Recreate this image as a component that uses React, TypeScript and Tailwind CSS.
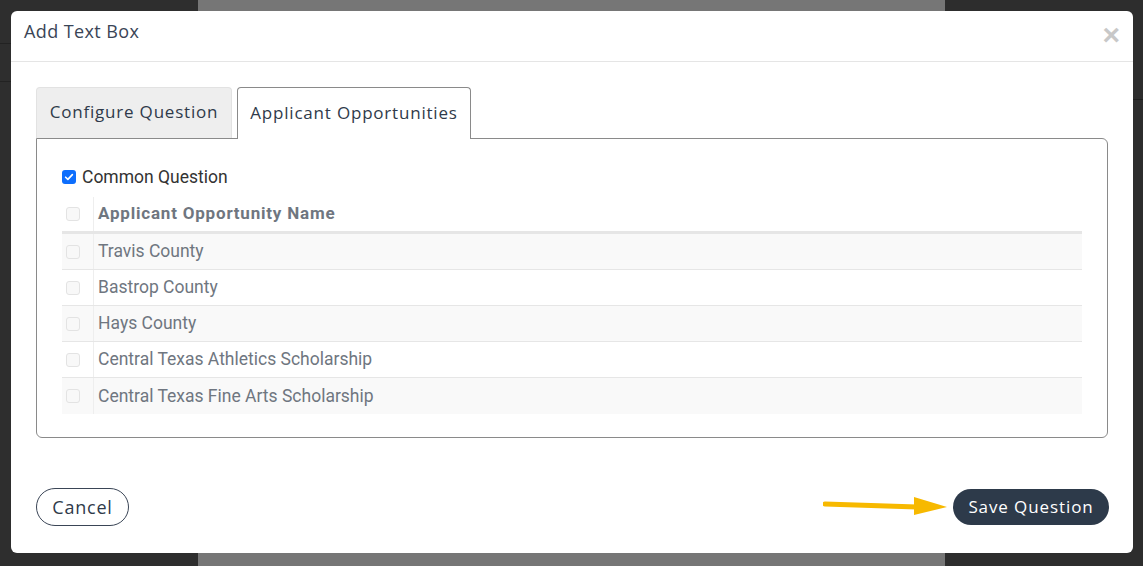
import React from "react";

const rows = [
  "Travis County",
  "Bastrop County",
  "Hays County",
  "Central Texas Athletics Scholarship",
  "Central Texas Fine Arts Scholarship",
];

function Box() {
  return <span className="block w-[14px] h-[14px] rounded-[3px] border border-[#e3e3e3] bg-[#f8f8f8]" />;
}

export default function App() {
  const poppins = { fontFamily: "'Open Sans', 'Noto Sans', sans-serif" };
  return (
    <div className="relative w-[1143px] h-[566px] overflow-hidden flex bg-[#2f2f2f]">
      <div className="w-[198px] h-full bg-[#2e2e2e] flex flex-col">
        <div className="h-[44px] border-b border-[#222]" />
        <div className="h-[38px] border-b border-[#222]" />
      </div>
      <div className="w-[747px] h-full bg-[#767676]" />
      <div className="flex-1 h-full bg-[#2d2d2d] flex flex-col">
        <div className="h-[42px]" />
        <div className="h-[58px] border-b border-[#1f1f1f]" />
      </div>

      <div className="absolute left-[11px] top-[11px] w-[1122px] h-[542px] bg-white rounded-[6px] flex flex-col">
        <div className="h-[51px] border-b border-[#e5e5e5] flex items-center justify-between pl-[13px] pr-[13px] pb-[9px] shrink-0">
          <span className="text-[18px] text-[#3a4556] tracking-[0.4px]" style={poppins}>Add Text Box</span>
          <span className="text-[30px] leading-none text-[#c8c8c8] font-bold mt-[7px]" style={{ fontFamily: "'Liberation Sans', sans-serif" }}>×</span>
        </div>

        <div className="px-[25px] pt-[25px] flex-1 flex flex-col">
          <div className="flex items-end gap-[5px] h-[51px]">
            <div
              className="w-[196px] h-[51px] bg-[#eeeeee] border border-[#e2e2e2] border-b-0 rounded-t-[4px] flex items-center justify-center text-[17px] tracking-[0.8px] text-[#2f3a4a] pb-[2px]"
              style={poppins}
            >
              Configure Question
            </div>
            <div
              className="w-[234px] h-[52px] bg-white border border-[#8a8a8a] border-b-0 rounded-t-[4px] flex items-center justify-center text-[17px] tracking-[0.8px] text-[#2f3a4a] relative top-[1px] z-10 pb-[2px]"
              style={poppins}
            >
              Applicant Opportunities
            </div>
          </div>
          <div className="h-[300px] border border-[#8a8a8a] rounded-b-[6px] rounded-tr-[6px] px-[25px] pt-[28px]" style={{ fontFamily: "Roboto, sans-serif" }}>
            <div className="flex items-center gap-[6px] h-[20px]">
              <span className="w-[14px] h-[14px] rounded-[3px] bg-[#0d6efd] flex items-center justify-center">
                <svg viewBox="0 0 16 16" className="w-[12px] h-[12px]">
                  <path d="M3.5 8.3 L6.5 11.2 L12.5 4.8" fill="none" stroke="white" strokeWidth="2.2" strokeLinecap="round" strokeLinejoin="round" />
                </svg>
              </span>
              <span className="text-[17.5px] text-[#333]">Common Question</span>
            </div>
            <div className="mt-[10px]">
              <div className="flex h-[37px] border-b-[3px] border-[#e6e6e6]">
                <div className="w-[32px] flex items-center pl-[4px] border-r border-[#eeeeee]"><Box /></div>
                <div className="flex items-center pl-[4px] text-[17px] tracking-[0.8px] font-bold text-[#6f7680]">Applicant Opportunity Name</div>
              </div>
              {rows.map((r, i) => (
                <div key={r} className={`flex h-[36px] ${i < rows.length - 1 ? "border-b border-[#e6e6e6]" : ""} ${i % 2 === 0 ? "bg-[#f9f9f9]" : "bg-white"}`}>
                  <div className="w-[32px] flex items-center pl-[4px] border-r border-[#eeeeee]"><Box /></div>
                  <div className="flex items-center pl-[4px] text-[17.5px] text-[#6f7680]">{r}</div>
                </div>
              ))}
            </div>
          </div>
        </div>

        <div className="h-[75px] px-[24px] pb-[17px] flex items-center justify-between shrink-0">
          <button
            className="h-[38px] w-[93px] ml-[1px] rounded-full border border-[#3a4556] text-[18px] tracking-[0.8px] text-[#2f3a4a] bg-white"
            style={poppins}
          >
            Cancel
          </button>
          <div className="flex items-center gap-[4px]">
            <svg width="126" height="22" viewBox="0 0 126 22">
              <line x1="2" y1="8" x2="94" y2="11" stroke="#f7b900" strokeWidth="5" strokeLinecap="round" />
              <polygon points="91,1 124,11 91,19" fill="#f7b900" />
            </svg>
            <button
              className="h-[36px] w-[156px] rounded-full bg-[#2d3a4a] text-[17px] tracking-[0.9px] text-white"
              style={poppins}
            >
              Save Question
            </button>
          </div>
        </div>
      </div>
    </div>
  );
}
